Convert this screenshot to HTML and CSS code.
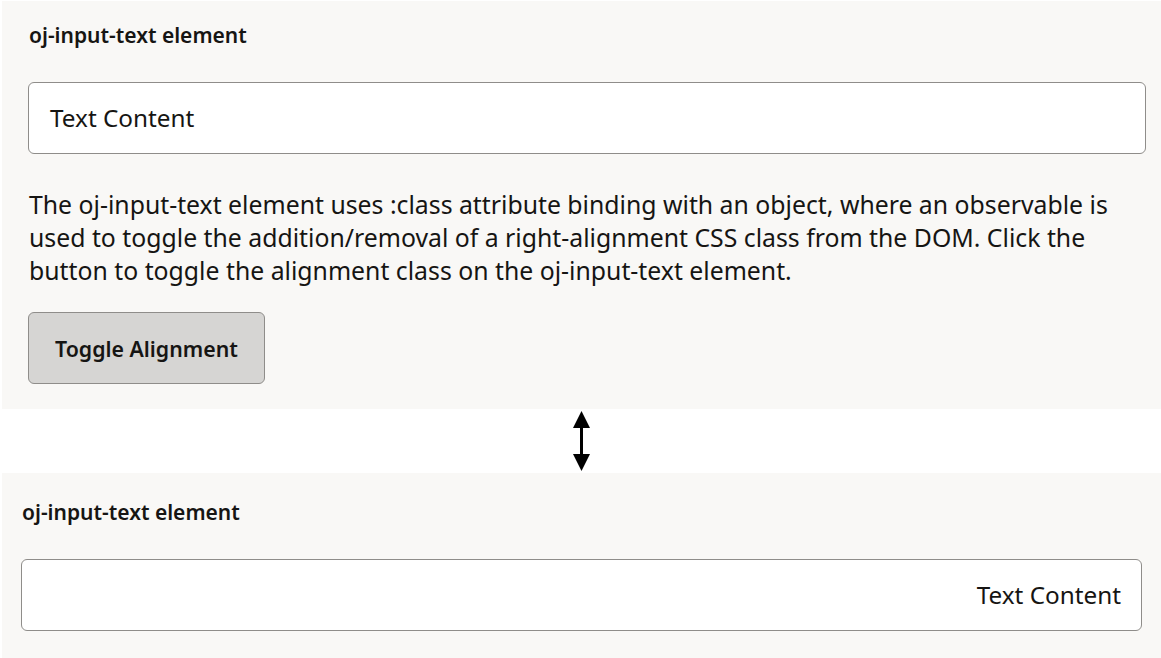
FILE: index.html
```html
<!DOCTYPE html>
<html>
<head>
<meta charset="utf-8">
<link rel="stylesheet" href="styles.css">
</head>
<body>
<section class="panel panel-top">
  <h2 class="label">oj-input-text element</h2>
  <div class="field"><span class="value">Text Content</span></div>
  <p class="desc">The oj-input-text element uses :class attribute binding with an object, where an observable is used to toggle the addition/removal of a right-alignment CSS class from the DOM. Click the button to toggle the alignment class on the oj-input-text element.</p>
  <button class="btn">Toggle Alignment</button>
</section>
<div class="arrow-row">
  <svg class="arrow" width="17" height="60" viewBox="0 0 17 60">
    <polygon points="8.5,0 17,17 0,17" fill="#000"/>
    <rect x="7" y="16" width="3" height="28" fill="#000"/>
    <polygon points="0,43 17,43 8.5,60" fill="#000"/>
  </svg>
</div>
<section class="panel panel-bottom">
  <h2 class="label">oj-input-text element</h2>
  <div class="field field-right"><span class="value">Text Content</span></div>
</section>
</body>
</html>
```
FILE: styles.css
```css
html, body {
  margin: 0;
  padding: 0;
  background: #ffffff;
}
body {
  font-family: "Noto Sans", "Open Sans", sans-serif;
  color: #161513;
  overflow: hidden;
}
.panel {
  background: #f9f8f6;
  margin-left: 2px;
  display: flex;
  flex-direction: column;
  align-items: flex-start;
}
.panel-top {
  margin-top: 1px;
  padding: 22px 15px 25px 26px;
}
.panel-bottom {
  padding: 27px 19px 30px 19px;
}
.label {
  margin: 0;
  font-size: 21px;
  font-weight: 600;
  line-height: 24px;
  padding-left: 1px;
}
.field {
  margin-top: 35px;
  align-self: stretch;
  height: 70px;
  background: #ffffff;
  border: 1px solid #8f8d8a;
  border-radius: 6px;
  display: flex;
  align-items: center;
  padding: 0 20px 0 21px;
  box-sizing: content-box;
}
.field-right {
  justify-content: flex-end;
}
.value {
  font-size: 24.3px;
  line-height: 30px;
}
.desc {
  margin: 34px 0 0 1px;
  font-size: 24.8px;
  line-height: 33px;
}
.btn {
  margin-top: 25px;
  width: 237px;
  height: 72px;
  background: #d6d5d3;
  border: 1px solid #8f8d8a;
  border-radius: 6px;
  font-family: inherit;
  font-size: 21.3px;
  font-weight: 600;
  color: #161513;
  padding: 0;
}
.arrow-row {
  height: 64px;
  display: flex;
  justify-content: center;
  align-items: center;
  padding-left: 2px;
}
.arrow {
  display: block;
}
```
